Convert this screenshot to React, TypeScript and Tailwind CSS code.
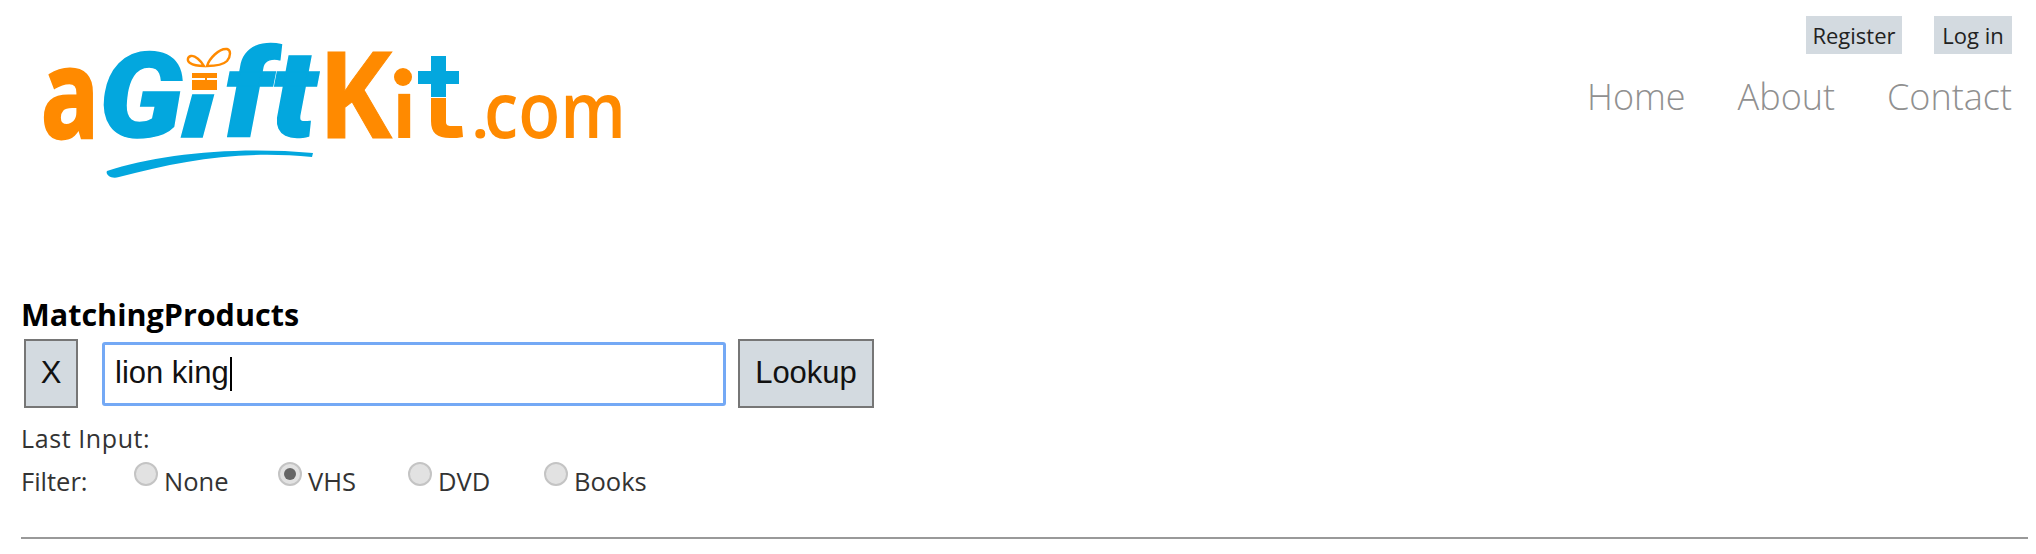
const ORANGE = "#ff8a00";
const BLUE = "#03a7de";

function Logo() {
  const font = "'Open Sans', 'Noto Sans', sans-serif";
  const italic = "Roboto, 'Noto Sans', sans-serif";
  return (
    <svg width="640" height="190" viewBox="0 0 640 190" className="block shrink-0">
      <g fontFamily={font} fontWeight="700">
        <text x="41" y="138" fontSize="124" fill={ORANGE} stroke={ORANGE} strokeWidth="3" textLength="58" lengthAdjust="spacingAndGlyphs">a</text>
        <text x="318" y="138" fontSize="120" fill={ORANGE} stroke={ORANGE} strokeWidth="1" textLength="74" lengthAdjust="spacingAndGlyphs">K</text>
        <text x="392" y="138" fontSize="80" fill={ORANGE}>ı</text>
        <text x="472" y="138" fontSize="58" fill={ORANGE}>.</text>
        <text x="484" y="138" fontSize="78" fontWeight="600" fill={ORANGE} textLength="142" lengthAdjust="spacingAndGlyphs">com</text>
      </g>
      <g fontFamily={italic} fontWeight="900" fontStyle="italic" fill={BLUE} stroke={BLUE} strokeWidth="1.5">
        <text x="99" y="137" fontSize="118" textLength="84" lengthAdjust="spacingAndGlyphs">G</text>
        <text x="181" y="137" fontSize="80" textLength="34" lengthAdjust="spacingAndGlyphs">ı</text>
        <text x="224" y="137" fontSize="122" textLength="92" lengthAdjust="spacingAndGlyphs">ft</text>
      </g>
      {/* gift box + bow over the i */}
      <path d="M192 73h25v5h-10v12h-2v-12h-13zM192 80h13v10h-13zM207 80h10v10h-10z" fill={ORANGE} />
      <g fill="none" stroke={ORANGE} strokeWidth="2.4">
        <path d="M204 66c-3-5-9-11-13-10-4 1-4 5-1 7 3 2 9 3 14 3z" />
        <path d="M207 66c2-7 12-18 20-17 4 1 4 7 0 12-4 4-14 5-20 5z" />
      </g>
      {/* i dot */}
      <circle cx="403" cy="77" r="9" fill={ORANGE} />
      {/* t: plus on top, hook below */}
      <path d="M431 56h15v15h13v13h-13v13h-15v-13h-13v-13h13z" fill={BLUE} />
      <path d="M431 98h15v24c0 3 2 4 5 4h11l1 11c-4 1-8 1-13 1-13 0-19-5-19-17z" fill={ORANGE} />
      {/* swoosh */}
      <path d="M107 171c50-17 130-25 206-18l-1 4c-70-7-130 3-193 20-8 3-14-3-12-6z" fill={BLUE} />
    </svg>
  );
}

function Radio({ label, checked, className }: { label: string; checked?: boolean; className: string }) {
  return (
    <div className={`flex items-start ${className}`}>
      <span className="mt-[-1px] flex h-[24px] w-[24px] items-center justify-center rounded-full border-2 border-[#c4c4c4] bg-[#e2e2e2]">
        {checked && <span className="h-[12px] w-[12px] rounded-full bg-[#666666]" />}
      </span>
      <span className="ml-[6px]">{label}</span>
    </div>
  );
}

export default function App() {
  return (
    <div className="h-[554px] overflow-hidden bg-white font-['Open_Sans','Noto_Sans',sans-serif] text-[#333333]">
      <header className="flex justify-between pr-[24px]">
        <Logo />
        <div className="flex flex-col items-end pt-[16px]">
          <div className="flex gap-[32px] text-[22px] leading-[38px] text-[#222222]">
            <a className="w-[96px] bg-[#d3dae0] text-center">Register</a>
            <a className="w-[78px] bg-[#d3dae0] text-center">Log in</a>
          </div>
          <nav className="mt-[21px] flex gap-[52px] text-[36px] leading-[44px] font-light text-[#909090]">
            <a>Home</a>
            <a>About</a>
            <a>Contact</a>
          </nav>
        </div>
      </header>

      <main className="pr-[8px] pl-[21px] pt-[105px]">
        <h2 className="text-[30.5px] leading-[38px] font-bold text-black">MatchingProducts</h2>
        <div className="mt-[6px] flex items-center font-['Liberation_Sans',sans-serif] text-[31px] text-[#111111]">
          <button type="button" className="ml-[3px] h-[69px] w-[54px] border-2 border-[#767676] bg-[#d3dae0]">X</button>
          <div className="ml-[24px] flex h-[64px] w-[624px] items-center rounded-[3px] border-[3px] border-[#74a9f5] pl-[10px]">
            lion king
            <span className="ml-px h-[34px] w-[2px] bg-black" />
          </div>
          <button type="button" className="ml-[12px] h-[69px] w-[136px] border-2 border-[#767676] bg-[#d3dae0]">Lookup</button>
        </div>
        <p className="mt-[12px] text-[25px] leading-[36px] tracking-[0.6px]">Last Input:</p>
        <div className="mt-[7px] flex text-[25.5px] leading-[36px]">
          <span className="w-[113px]">Filter:</span>
          <Radio label="None" className="w-[144px]" />
          <Radio label="VHS" checked className="w-[130px]" />
          <Radio label="DVD" className="w-[136px]" />
          <Radio label="Books" className="w-[120px]" />
        </div>
        <hr className="mt-[38px] border-t-2 border-[#999999]" />
      </main>
    </div>
  );
}
